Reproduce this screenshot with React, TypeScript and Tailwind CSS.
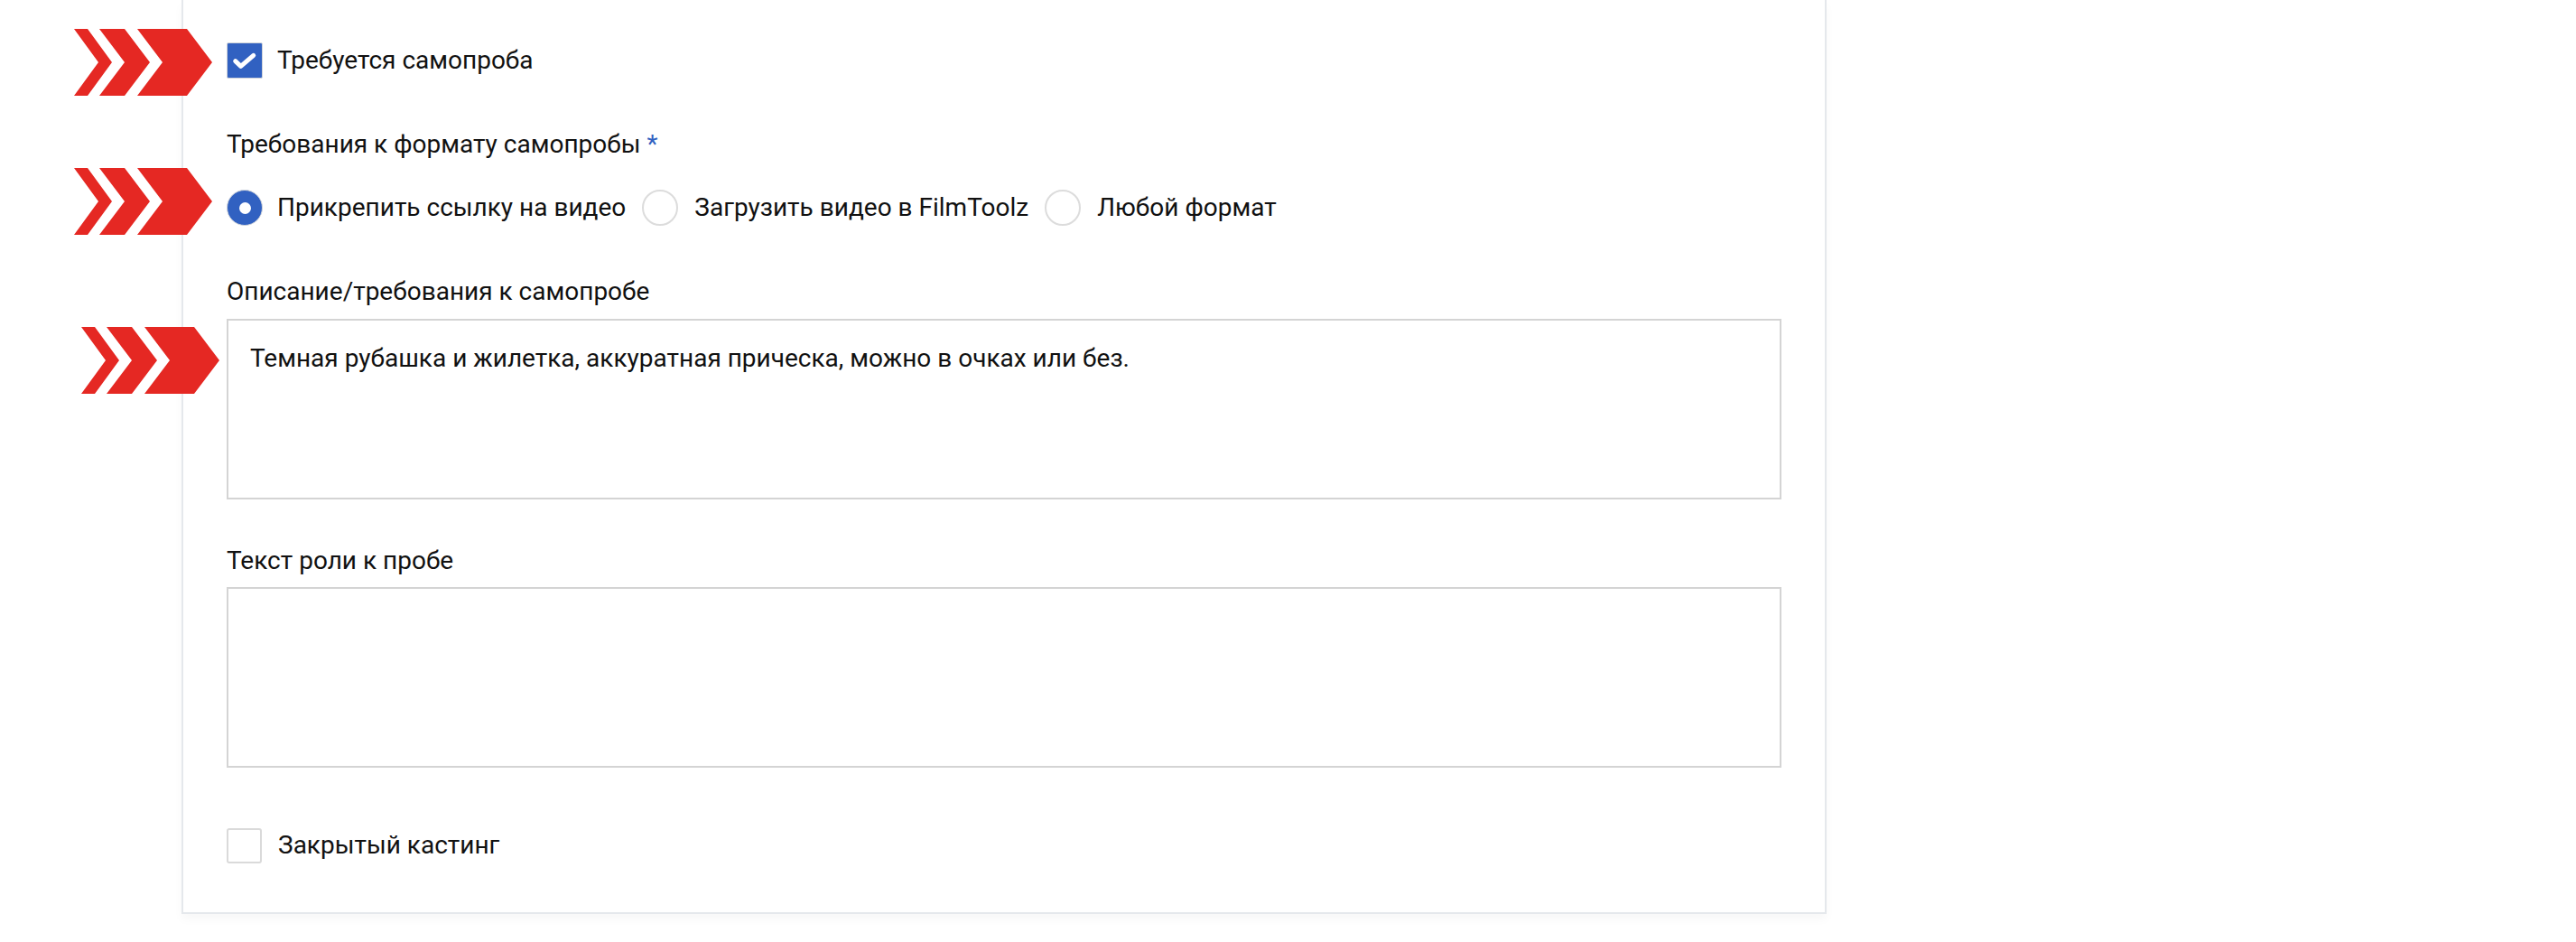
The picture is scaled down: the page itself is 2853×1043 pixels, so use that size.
import React from "react";

function Chevrons({ className }: { className: string }) {
  return (
    <svg className={className} width="153" height="74" viewBox="0 0 153 74" fill="#e52823">
      <polygon points="0,0 15,0 42,37 15,74 0,74 27,37" />
      <polygon points="28,0 56,0 84,37 56,74 28,74 56,37" />
      <polygon points="70,0 125,0 153,37 125,74 70,74 98,37" />
    </svg>
  );
}

function CheckedBox() {
  return (
    <div className="w-[40px] h-[40px] rounded-[2px] border border-[#cfd3da] bg-[#3161c1] flex items-center justify-center shrink-0">
      <svg width="38" height="38" viewBox="0 0 38 38">
        <polyline points="8.7,19.7 14.7,25.3 28.7,13.3" fill="none" stroke="#fff" strokeWidth="5" strokeLinecap="round" strokeLinejoin="round" />
      </svg>
    </div>
  );
}

function EmptyBox() {
  return <div className="w-[39px] h-[39px] rounded-[3px] border-2 border-[#dadada] bg-white shrink-0" />;
}

function Radio({ checked }: { checked?: boolean }) {
  if (checked) {
    return (
      <div className="w-[40px] h-[40px] rounded-full border border-[#d0d4da] bg-[#3161c1] flex items-center justify-center shrink-0">
        <div className="w-[13px] h-[13px] rounded-full bg-white" />
      </div>
    );
  }
  return <div className="w-[40px] h-[40px] rounded-full border-2 border-[#dcdcdc] bg-white shrink-0" />;
}

export default function App() {
  return (
    <div
      className="w-[2853px] h-[1043px] bg-white relative overflow-hidden text-[#111111]"
      style={{ fontFamily: "Roboto, 'Noto Sans', Arial, sans-serif" }}
    >
      <div className="pl-[201px]">
        <div className="w-[1822px] border-x-2 border-b-2 border-[#e5e8ec] bg-white px-[48px] pt-[46px] pb-[54px] shadow-[0_6px_10px_rgba(0,0,0,0.03)] text-[28px] leading-[42px]">
          <div className="flex items-center gap-[16px] h-[42px]">
            <CheckedBox />
            <span>Требуется самопроба</span>
          </div>

          <div className="mt-[51px]">
            <div>
              Требования к формату самопробы <span className="text-[#3161c1]">*</span>
            </div>
            <div className="mt-[28px] flex items-center h-[42px]">
              <div className="flex items-center gap-[16px]">
                <Radio checked />
                <span>Прикрепить ссылку на видео</span>
              </div>
              <div className="flex items-center gap-[18px] ml-[18px]">
                <Radio />
                <span>Загрузить видео в FilmToolz</span>
              </div>
              <div className="flex items-center gap-[18px] ml-[18px]">
                <Radio />
                <span>Любой формат</span>
              </div>
            </div>
          </div>

          <div className="mt-[51px]">
            <div>Описание/требования к самопробе</div>
            <div className="mt-[9px] h-[200px] border-2 border-[#d4d4d4] px-[24px] pt-[21px] text-[28px] leading-[42px]">
              Темная рубашка и жилетка, аккуратная прическа, можно в очках или без.
            </div>
          </div>

          <div className="mt-[47px]">
            <div>Текст роли к пробе</div>
            <div className="mt-[8px] h-[200px] border-2 border-[#d4d4d4]" />
          </div>

          <div className="mt-[66px] flex items-center gap-[18px] h-[40px]">
            <EmptyBox />
            <span>Закрытый кастинг</span>
          </div>
        </div>
      </div>

      <Chevrons className="absolute left-[82px] top-[32px]" />
      <Chevrons className="absolute left-[82px] top-[186px]" />
      <Chevrons className="absolute left-[90px] top-[362px]" />
    </div>
  );
}
